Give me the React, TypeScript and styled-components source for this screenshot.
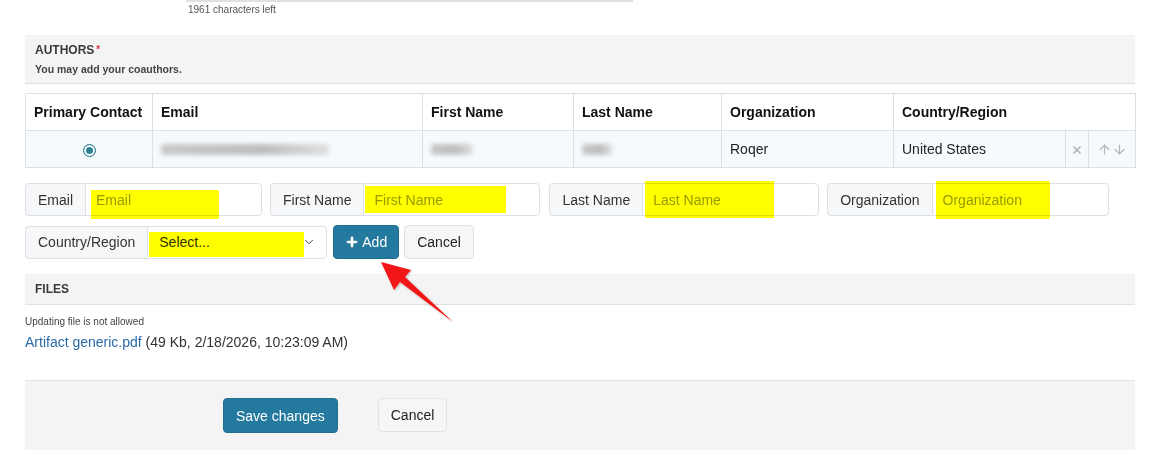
import React from "react";
import styled, { createGlobalStyle } from "styled-components";
import { X, ArrowUp, ArrowDown, ChevronDown, Plus } from "lucide-react";

const GlobalStyle = createGlobalStyle`
  body {
    margin: 0;
    background: #fff;
    font-family: "Liberation Sans", Arial, sans-serif;
    color: #333;
  }
`;

const Page = styled.div`
  position: relative;
  width: 1163px;
  height: 450px;
  overflow: hidden;
  padding-left: 25px;
  box-sizing: border-box;
`;

const Content = styled.div`
  width: 1110px;
`;

const Hint = styled.div`
  margin-left: 161px;
  width: 447px;
`;

const HintLine = styled.div`
  height: 2px;
  background: #dfe1e5;
`;

const HintText = styled.div`
  font-size: 10px;
  line-height: 14px;
  color: #555;
  padding: 1px 0 0 2px;
`;

const PanelHeader = styled.div<{ $mt: number; $h?: number }>`
  margin-top: ${(p) => p.$mt}px;
  background: #f4f4f4;
  border-bottom: 1px solid #e0e0e0;
  padding: 0 10px;
  display: flex;
  flex-direction: column;
  justify-content: center;
  height: ${(p) => p.$h ?? 48}px;
`;

const PanelTitle = styled.div`
  font-size: 12px;
  line-height: 16px;
  font-weight: bold;
  color: #3a3a3a;
  text-transform: uppercase;
`;

const Required = styled.span`
  color: #d9334a;
  font-size: 10px;
  margin-left: 2px;
  vertical-align: top;
`;

const PanelSub = styled.div`
  font-size: 10.5px;
  line-height: 16px;
  font-weight: bold;
  color: #444;
  margin-top: 3px;
`;

const Table = styled.table`
  margin-top: 9px;
  width: 1110px;
  table-layout: fixed;
  border-collapse: collapse;
  font-size: 14px;
`;

const Th = styled.th`
  height: 36px;
  padding: 0 8px;
  border: 1px solid #dddfe3;
  text-align: left;
  font-weight: bold;
  color: #111;
  background: #fff;
  white-space: nowrap;
`;

const BodyRow = styled.tr`
  background: #f5fafd;
`;

const Td = styled.td<{ $center?: boolean }>`
  height: 36px;
  padding: 0 8px;
  border: 1px solid #dddfe3;
  color: #222;
  text-align: ${(p) => (p.$center ? "center" : "left")};
  white-space: nowrap;
`;

const IconCell = styled.td`
  height: 36px;
  padding: 0;
  border: 1px solid #dddfe3;
  text-align: center;
  color: #b5b5b5;
  white-space: nowrap;
  svg {
    vertical-align: middle;
  }
`;

const Radio = styled.span`
  display: inline-block;
  width: 11px;
  height: 11px;
  border-radius: 50%;
  border: 1px solid #2e7d8f;
  background: #2e8396;
  box-shadow: inset 0 0 0 2px #fff;
  vertical-align: middle;
`;

const Blur = styled.div<{ $w: number }>`
  width: ${(p) => p.$w}px;
  height: 11px;
  border-radius: 3px;
  background: linear-gradient(90deg, #c9c9c9, #bdbdbd 60%, #e0e0e0);
  filter: blur(2px);
`;

const FormRow = styled.div<{ $mt: number }>`
  display: flex;
  align-items: center;
  margin-top: ${(p) => p.$mt}px;
  gap: 8px;
`;

const Group = styled.div`
  display: flex;
  height: 33px;
  font-size: 14px;
`;

const Addon = styled.div`
  display: flex;
  align-items: center;
  padding: 0 12px;
  background: #f6f7f9;
  border: 1px solid #dcdfe4;
  border-right: none;
  border-radius: 4px 0 0 4px;
  color: #333;
  white-space: nowrap;
`;

const Field = styled.div<{ $w: number }>`
  position: relative;
  width: ${(p) => p.$w}px;
  border: 1px solid #dcdfe4;
  border-radius: 0 4px 4px 0;
  background: #fff;
  box-sizing: border-box;
  display: flex;
  align-items: center;
`;

const Input = styled.input`
  border: none;
  outline: none;
  background: transparent;
  width: 100%;
  height: 100%;
  padding: 0 10px;
  font: inherit;
  font-size: 14px;
  color: #333;
  &::placeholder {
    color: #999;
  }
`;

const SelectText = styled.div`
  flex: 1;
  padding: 0 11px;
  color: #333;
`;

const Chevron = styled.span`
  display: flex;
  margin-right: 10px;
  color: #333;
`;

const Marker = styled.div<{ $x: number; $y: number; $w: number; $h: number }>`
  position: absolute;
  left: ${(p) => p.$x}px;
  top: ${(p) => p.$y}px;
  width: ${(p) => p.$w}px;
  height: ${(p) => p.$h}px;
  background: #ffff00;
  mix-blend-mode: multiply;
  pointer-events: none;
`;

const Button = styled.button<{ $primary?: boolean; $h?: number }>`
  height: ${(p) => p.$h ?? 34}px;
  padding: 0 12px;
  border-radius: 4px;
  font-family: inherit;
  font-size: 14px;
  display: inline-flex;
  align-items: center;
  gap: 3px;
  cursor: pointer;
  border: 1px solid ${(p) => (p.$primary ? "#1f6f90" : "#e2e2e2")};
  background: ${(p) => (p.$primary ? "#23799e" : "#f6f6f6")};
  color: ${(p) => (p.$primary ? "#fff" : "#222")};
`;

const AddButton = styled(Button)`
  margin-left: -2px;
  padding: 0 11px;
`;

const CancelSmall = styled(Button)`
  margin-left: -3px;
`;

const Note = styled.div`
  margin-top: 10px;
  font-size: 10px;
  line-height: 14px;
  color: #444;
`;

const FileLine = styled.div`
  font-size: 14px;
  line-height: 18px;
  color: #333;
  margin-top: 4px;
`;

const FileLink = styled.a`
  color: #2a6aa8;
  text-decoration: none;
`;

const Footer = styled.div`
  margin-top: 29px;
  height: 80px;
  background: #f4f4f4;
  border-top: 1px solid #e2e2e2;
  display: flex;
  align-items: flex-start;
  padding: 17px 0 0 198px;
  gap: 40px;
  box-sizing: border-box;
`;

const Overlay = styled.svg`
  position: absolute;
  left: 0;
  top: 0;
  pointer-events: none;
`;

const colWidths = [127, 270, 151, 148, 172, 172, 23, 47];

export default function App() {
  return (
    <>
      <GlobalStyle />
      <Page>
        <Content>
          <Hint>
            <HintLine />
            <HintText>1961 characters left</HintText>
          </Hint>

          <PanelHeader $mt={18}>
            <PanelTitle>
              Authors<Required>*</Required>
            </PanelTitle>
            <PanelSub>You may add your coauthors.</PanelSub>
          </PanelHeader>

          <Table>
            <colgroup>
              {colWidths.map((w, i) => (
                <col key={i} style={{ width: w }} />
              ))}
            </colgroup>
            <thead>
              <tr>
                <Th>Primary Contact</Th>
                <Th>Email</Th>
                <Th>First Name</Th>
                <Th>Last Name</Th>
                <Th>Organization</Th>
                <Th colSpan={3}>Country/Region</Th>
              </tr>
            </thead>
            <tbody>
              <BodyRow>
                <Td $center>
                  <Radio />
                </Td>
                <Td>
                  <Blur $w={168} />
                </Td>
                <Td>
                  <Blur $w={42} />
                </Td>
                <Td>
                  <Blur $w={30} />
                </Td>
                <Td>Roqer</Td>
                <Td>United States</Td>
                <IconCell>
                  <X size={12} strokeWidth={3.5} />
                </IconCell>
                <IconCell>
                  <ArrowUp size={15} strokeWidth={2} />
                  <ArrowDown size={15} strokeWidth={2} />
                </IconCell>
              </BodyRow>
            </tbody>
          </Table>

          <FormRow $mt={15}>
            <Group>
              <Addon>Email</Addon>
              <Field $w={177}>
                <Input placeholder="Email" />
                <Marker $x={5} $y={6} $w={128} $h={29} />
              </Field>
            </Group>
            <Group>
              <Addon>First Name</Addon>
              <Field $w={177}>
                <Input placeholder="First Name" />
                <Marker $x={1} $y={2} $w={141} $h={27} />
              </Field>
            </Group>
            <Group style={{ marginLeft: 1 }}>
              <Addon>Last Name</Addon>
              <Field $w={177}>
                <Input placeholder="Last Name" />
                <Marker $x={2} $y={-3} $w={129} $h={37} />
              </Field>
            </Group>
            <Group>
              <Addon>Organization</Addon>
              <Field $w={177}>
                <Input placeholder="Organization" />
                <Marker $x={3} $y={-3} $w={114} $h={38} />
              </Field>
            </Group>
          </FormRow>

          <FormRow $mt={9}>
            <Group>
              <Addon>Country/Region</Addon>
              <Field $w={180}>
                <SelectText>Select...</SelectText>
                <Chevron>
                  <ChevronDown size={14} strokeWidth={1.6} />
                </Chevron>
                <Marker $x={1} $y={5} $w={155} $h={25} />
              </Field>
            </Group>
            <AddButton $primary>
              <Plus size={14} strokeWidth={4.5} />
              Add
            </AddButton>
            <CancelSmall>Cancel</CancelSmall>
          </FormRow>

          <PanelHeader $mt={15} $h={30}>
            <PanelTitle>Files</PanelTitle>
          </PanelHeader>
          <Note>Updating file is not allowed</Note>
          <FileLine>
            <FileLink href="#">Artifact generic.pdf</FileLink> (49 Kb, 2/18/2026, 10:23:09 AM)
          </FileLine>

          <Footer>
            <Button $primary $h={35}>
              Save changes
            </Button>
            <Button $h={34}>Cancel</Button>
          </Footer>
        </Content>

        <Overlay width={1163} height={450}>
          <defs>
            <filter id="sh" x="-20%" y="-20%" width="140%" height="140%">
              <feDropShadow dx="1" dy="1" stdDeviation="1" floodColor="#000" floodOpacity="0.25" />
            </filter>
          </defs>
          <polygon
            points="381,262 411,270 405,277 453,322 400,282 394,290"
            fill="#f21616"
            filter="url(#sh)"
          />
        </Overlay>
      </Page>
    </>
  );
}
